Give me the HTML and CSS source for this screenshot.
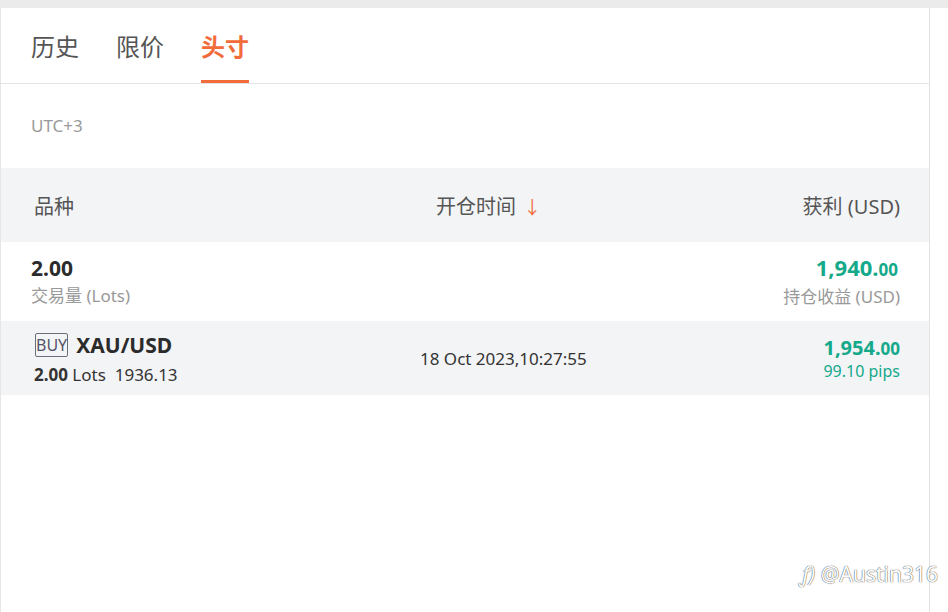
FILE: index.html
```html
<!DOCTYPE html>
<html>
<head>
    <meta charset="UTF-8">
    <title>头寸</title>
    <link rel="stylesheet" href="styles.css">
</head>
<body>
    <div class="topbar"></div>
    <div class="panel">
        <div class="tabs">
            <div class="tab">历史</div>
            <div class="tab">限价</div>
            <div class="tab active">头寸</div>
        </div>
        <div class="timezone">UTC+3</div>

        <div class="row head">
            <div class="cell-left">品种</div>
            <div class="cell-mid head-mid">开仓时间 <span class="arrow">↓</span></div>
            <div class="cell-right">获利 (USD)</div>
        </div>

        <div class="row summary">
            <div class="cell-left">
                <div class="big">2.00</div>
                <div class="sub">交易量 (Lots)</div>
            </div>
            <div class="cell-mid"></div>
            <div class="cell-right">
                <div class="profit big-profit">1,940.<span class="cents">00</span></div>
                <div class="sub">持仓收益 (USD)</div>
            </div>
        </div>

        <div class="row position">
            <div class="cell-left">
                <div class="symbol-line">
                    <span class="side">BUY</span>
                    <span class="symbol">XAU/USD</span>
                </div>
                <div class="lots"><b>2.00</b> Lots&nbsp; 1936.13</div>
            </div>
            <div class="cell-mid date-mid">18 Oct 2023,10:27:55</div>
            <div class="cell-right">
                <div class="profit">1,954.<span class="cents">00</span></div>
                <div class="pips">99.10 pips</div>
            </div>
        </div>
    </div>
    <div class="watermark"><span class="wm-icon">ƒ)</span> @Austin316</div>
</body>
</html>
```

FILE: styles.css
```css
body {
    margin: 0;
    background-color: #fff;
    font-family: "Noto Sans", "Noto Sans CJK SC", sans-serif;
    color: #333;
    height: 612px;
    overflow: hidden;
}

.topbar {
    height: 8px;
    background-color: #ebebeb;
}

.panel {
    width: 930px;
    height: 604px;
    border-left: 1px solid #e6e6e6;
    border-right: 1px solid #e3e3e3;
    box-sizing: border-box;
}

.tabs {
    display: flex;
    gap: 37px;
    padding-left: 30px;
    height: 75px;
    border-bottom: 1px solid #e4e4e4;
}

.tab {
    font-size: 24px;
    color: #555;
    line-height: 1;
    padding-top: 27px;
    box-sizing: border-box;
    height: 75px;
    border-bottom: 3px solid transparent;
}

.tab.active {
    color: #f26b3a;
    font-weight: bold;
    border-bottom-color: #f26b3a;
}

.timezone {
    height: 84px;
    line-height: 84px;
    padding-left: 30px;
    font-size: 17px;
    color: #9a9a9a;
}

.row {
    display: grid;
    grid-template-columns: 370px 1fr auto;
    align-items: center;
    padding: 0 29px 0 30px;
}

.row.head {
    height: 74px;
    background-color: #f3f4f6;
    font-size: 20px;
    color: #555;
}

.head .cell-left {
    padding-left: 3px;
}

.head-mid {
    padding-left: 35px;
}

.arrow {
    color: #f26b3a;
    font-size: 18px;
    margin-left: 2px;
}

.row.summary {
    height: 79px;
}

.big {
    font-size: 21px;
    font-weight: bold;
    color: #2b2b2b;
    line-height: 27px;
}

.sub {
    font-size: 17px;
    color: #999;
    line-height: 27px;
}

.cell-right {
    text-align: right;
}

.profit {
    color: #14a98a;
    font-weight: bold;
    font-size: 20px;
    line-height: 24px;
}

.big-profit {
    font-size: 22px;
    line-height: 27px;
    margin-right: 2px;
}

.cents {
    font-size: 17px;
}

.row.position {
    height: 74px;
    background-color: #f3f4f6;
}

.symbol-line {
    display: flex;
    align-items: center;
    gap: 8px;
    margin-left: 4px;
}

.side {
    font-size: 16px;
    color: #556;
    border: 1px solid #6a6f7a;
    border-radius: 2px;
    padding: 0;
    line-height: 22px;
}

.symbol {
    font-size: 21px;
    font-weight: bold;
    color: #2b2b2b;
}

.lots {
    font-size: 17px;
    color: #333;
    margin-top: 4px;
    margin-left: 3px;
}

.date-mid {
    padding-left: 19px;
    font-size: 17px;
    color: #333;
}

.pips {
    font-size: 16px;
    color: #14a98a;
    line-height: 20px;
}

.watermark {
    position: absolute;
    right: 10px;
    top: 560px;
    font-size: 21px;
    color: #fff;
    text-shadow: 0 0 1px #555, 0 0 1px #555;
    font-family: "Noto Sans", sans-serif;
}

.wm-icon {
    font-style: italic;
}
```
